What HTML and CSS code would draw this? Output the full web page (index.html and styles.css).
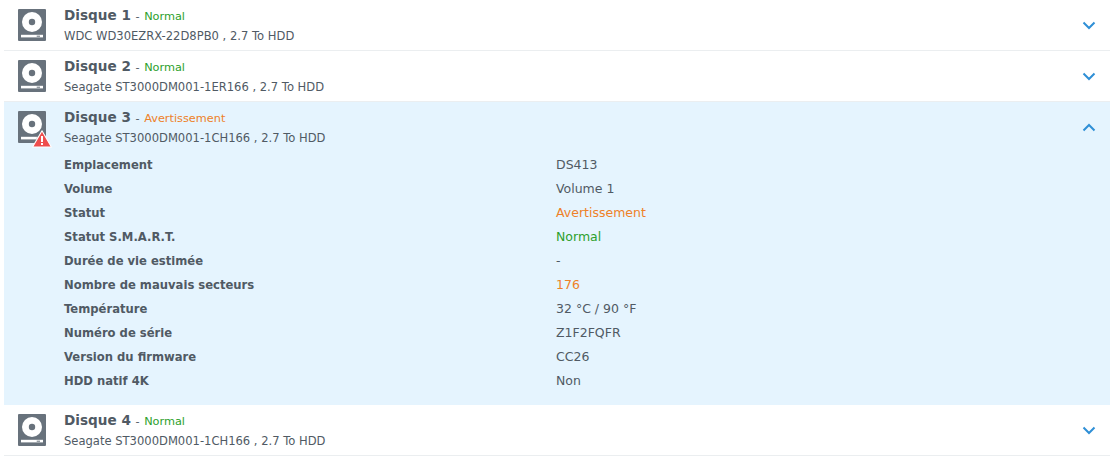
FILE: index.html
```html
<!DOCTYPE html>
<html lang="fr">
<head>
<meta charset="utf-8">
<title>Disques</title>
<link rel="stylesheet" href="styles.css">
</head>
<body>
<svg class="defs" width="0" height="0" aria-hidden="true">
  <symbol id="hdd" viewBox="0 0 28 32">
    <rect width="28" height="32" rx="1" fill="#68727c"/>
    <circle cx="14" cy="13" r="10" fill="#fff"/>
    <circle cx="14" cy="13" r="3.2" fill="#68727c"/>
    <rect x="3" y="25.8" width="22" height="2.6" fill="#fff"/>
    <rect x="18.7" y="26.7" width="3.3" height="1" fill="#68727c"/>
  </symbol>
  <symbol id="down" viewBox="0 0 14 9"><path d="M1.5 1.5 7 7l5.5-5.5" fill="none" stroke="#2f8fd6" stroke-width="2"/></symbol>
  <symbol id="up" viewBox="0 0 14 9"><path d="M1.5 7.5 7 2l5.5 5.5" fill="none" stroke="#2f8fd6" stroke-width="2"/></symbol>
</svg>
<div class="list">
  <section class="disk">
    <div class="head">
      <span class="icon"><svg class="hdd"><use href="#hdd"/></svg></span>
      <div class="info">
        <div class="title"><b>Disque 1</b> - <span class="ok">Normal</span></div>
        <div class="model">WDC WD30EZRX-22D8PB0 , 2.7 To HDD</div>
      </div>
      <svg class="chev"><use href="#down"/></svg>
    </div>
  </section>
  <section class="disk">
    <div class="head">
      <span class="icon"><svg class="hdd"><use href="#hdd"/></svg></span>
      <div class="info">
        <div class="title"><b>Disque 2</b> - <span class="ok">Normal</span></div>
        <div class="model">Seagate ST3000DM001-1ER166 , 2.7 To HDD</div>
      </div>
      <svg class="chev"><use href="#down"/></svg>
    </div>
  </section>
  <section class="disk open">
    <div class="head">
      <span class="icon">
        <svg class="hdd"><use href="#hdd"/></svg>
        <svg class="warn" viewBox="0 0 20 18"><path d="M10 .8 19.4 17H.6z" fill="#ee4d4d" stroke="#fff" stroke-width="1.1" stroke-linejoin="round"/><rect x="9" y="6" width="2" height="6" fill="#fff"/><rect x="9" y="13" width="2" height="2" fill="#fff"/></svg>
      </span>
      <div class="info">
        <div class="title"><b>Disque 3</b> - <span class="warntext">Avertissement</span></div>
        <div class="model">Seagate ST3000DM001-1CH166 , 2.7 To HDD</div>
      </div>
      <svg class="chev"><use href="#up"/></svg>
    </div>
    <dl class="details">
      <dt>Emplacement</dt><dd>DS413</dd>
      <dt>Volume</dt><dd>Volume 1</dd>
      <dt>Statut</dt><dd class="warntext">Avertissement</dd>
      <dt>Statut S.M.A.R.T.</dt><dd class="ok">Normal</dd>
      <dt>Durée de vie estimée</dt><dd>-</dd>
      <dt>Nombre de mauvais secteurs</dt><dd class="warntext">176</dd>
      <dt>Température</dt><dd>32 °C / 90 °F</dd>
      <dt>Numéro de série</dt><dd>Z1F2FQFR</dd>
      <dt>Version du firmware</dt><dd>CC26</dd>
      <dt>HDD natif 4K</dt><dd>Non</dd>
    </dl>
  </section>
  <section class="disk">
    <div class="head">
      <span class="icon"><svg class="hdd"><use href="#hdd"/></svg></span>
      <div class="info">
        <div class="title"><b>Disque 4</b> - <span class="ok">Normal</span></div>
        <div class="model">Seagate ST3000DM001-1CH166 , 2.7 To HDD</div>
      </div>
      <svg class="chev"><use href="#down"/></svg>
    </div>
  </section>
</div>
</body>
</html>
```
FILE: styles.css
```css
* { box-sizing: border-box; }
html, body { margin: 0; padding: 0; background: #fff; }
body { font-family: "DejaVu Sans", Verdana, sans-serif; font-size: 11.55px; color: #505a64; overflow: hidden; }
.defs { position: absolute; }
.list { margin: 0 0 0 4px; }
.disk { border-bottom: 1px solid #ebeef0; }
.disk.open { background: #e5f4fe; border-bottom-color: #e5f4fe; }
.head { height: 50px; display: flex; align-items: flex-start; }
.icon { position: relative; width: 28px; height: 32px; margin: 9px 0 0 14px; flex: none; }
.hdd { display: block; width: 28px; height: 32px; }
.warn { position: absolute; left: 14px; top: 19px; width: 20px; height: 18px; }
.info { margin-left: 18px; flex: 1; padding-top: 6px; }
.title { line-height: 18px; height: 18px; font-size: 11.3px; }
.title b { font-size: 13.6px; font-weight: bold; color: #505a64; margin-right: 1px; }
.title span { margin-left: 1px; }
.model { line-height: 16px; margin-top: 4px; color: #505a64; }
.ok { color: #2ca02c; }
.warntext { color: #ee8128; }
.chev { width: 14px; height: 9px; margin: 21px 14px 0 0; flex: none; }
.details { margin: 0 0 0 60px; padding: 1px 0 11px; display: grid; grid-template-columns: 492px 1fr; grid-auto-rows: 24px; align-items: center; font-size: 12.5px; }
dt { font-weight: bold; font-size: 11.6px; }
dd { margin: 0 0 2px; }
```
